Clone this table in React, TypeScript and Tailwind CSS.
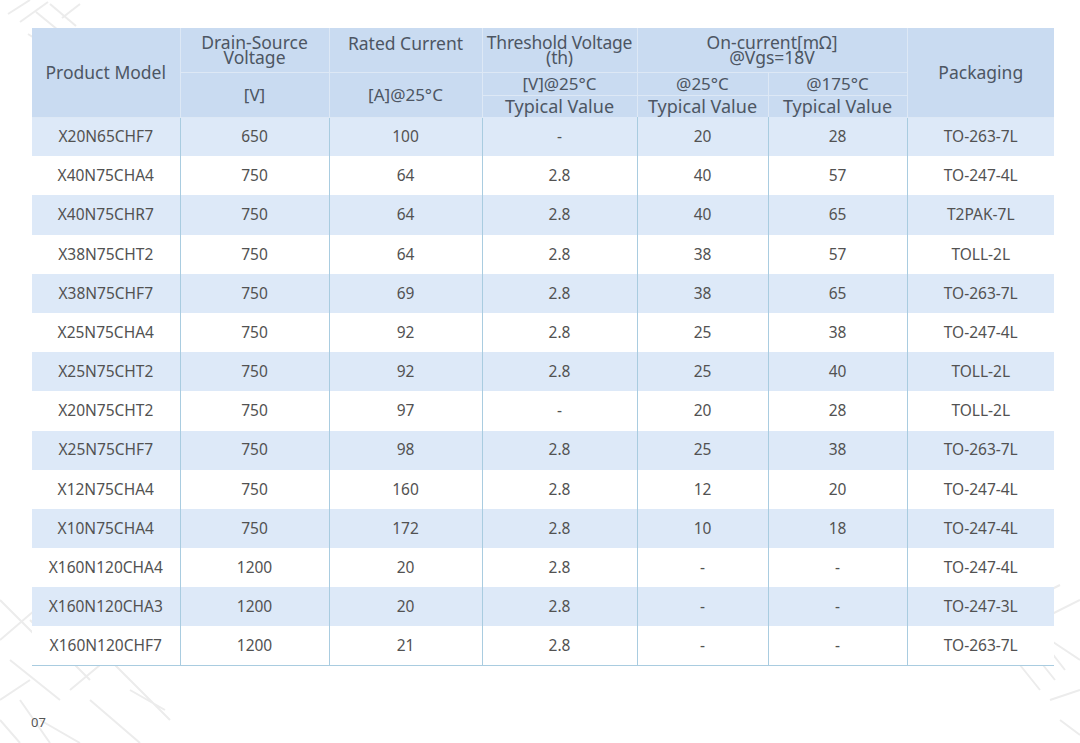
import React from "react";

const rows: string[][] = [
  ["X20N65CHF7", "650", "100", "-", "20", "28", "TO-263-7L"],
  ["X40N75CHA4", "750", "64", "2.8", "40", "57", "TO-247-4L"],
  ["X40N75CHR7", "750", "64", "2.8", "40", "65", "T2PAK-7L"],
  ["X38N75CHT2", "750", "64", "2.8", "38", "57", "TOLL-2L"],
  ["X38N75CHF7", "750", "69", "2.8", "38", "65", "TO-263-7L"],
  ["X25N75CHA4", "750", "92", "2.8", "25", "38", "TO-247-4L"],
  ["X25N75CHT2", "750", "92", "2.8", "25", "40", "TOLL-2L"],
  ["X20N75CHT2", "750", "97", "-", "20", "28", "TOLL-2L"],
  ["X25N75CHF7", "750", "98", "2.8", "25", "38", "TO-263-7L"],
  ["X12N75CHA4", "750", "160", "2.8", "12", "20", "TO-247-4L"],
  ["X10N75CHA4", "750", "172", "2.8", "10", "18", "TO-247-4L"],
  ["X160N120CHA4", "1200", "20", "2.8", "-", "-", "TO-247-4L"],
  ["X160N120CHA3", "1200", "20", "2.8", "-", "-", "TO-247-3L"],
  ["X160N120CHF7", "1200", "21", "2.8", "-", "-", "TO-263-7L"],
];

const widths = [148, 149, 153, 155, 131, 139, 147];

function Watermark() {
  return (
    <svg
      className="absolute inset-0 pointer-events-none"
      width="1080"
      height="743"
      viewBox="0 0 1080 743"
      fill="none"
      stroke="#ececec"
      strokeWidth="2"
    >
      <path d="M8 14 L30 0 M20 22 L48 2 M36 12 L58 30 M50 4 L76 26 M28 34 L50 48 M62 18 L80 4" />
      <path d="M0 600 L40 640 M0 640 L70 580 M10 660 L60 700 M30 620 L90 680 M60 650 L120 600 M70 690 L130 640 M20 700 L50 743 M90 700 L140 743 M110 660 L170 720 M0 700 L30 680 M40 720 L80 743 M130 690 L165 710" />
      <path d="M0 720 L20 743 M50 600 L80 630 M100 620 L140 660" />
      <path d="M1040 620 L1080 600 M1050 640 L1080 660 M1030 600 L1060 585 M1000 640 L1040 690 M1015 630 L1055 680 M1030 625 L1065 670 M1050 700 L1080 690 M1060 720 L1080 735 M1010 600 L1050 605" />
    </svg>
  );
}

export default function App() {
  const hdr =
    "bg-[#c9dbf1] text-[#4d5663] font-normal border border-[#dde8f5] p-0 align-middle text-center whitespace-nowrap";
  return (
    <div
      className="relative w-[1080px] h-[743px] bg-white overflow-hidden"
      style={{ fontFamily: '"Noto Sans", "Open Sans", sans-serif' }}
    >
      <Watermark />
      <div className="relative pt-[28px] pl-[32px]">
        <table className="table-fixed border-collapse w-[1022px]">
          <colgroup>
            {widths.map((w, i) => (
              <col key={i} style={{ width: w }} />
            ))}
          </colgroup>
          <thead>
            <tr className="h-[44px]">
              <th rowSpan={3} className={`${hdr} text-[17.5px] border-l-0 border-t-0`}>
                Product Model
              </th>
              <th className={`${hdr} text-[17.5px] leading-[15px] border-t-0 pt-[1px]`}>
                Drain-Source
                <br />
                Voltage
              </th>
              <th className={`${hdr} text-[17.5px] leading-[15px] border-t-0 align-top pt-[8px]`}>
                Rated Current
              </th>
              <th className={`${hdr} text-[17.5px] tracking-[-0.2px] leading-[15px] border-t-0 pt-[1px]`}>
                Threshold Voltage
                <br />
                (th)
              </th>
              <th colSpan={2} className={`${hdr} text-[17.5px] leading-[15px] border-t-0 pt-[1px]`}>
                On-current[mΩ]
                <br />
                @Vgs=18V
              </th>
              <th rowSpan={3} className={`${hdr} text-[17.5px] border-r-0 border-t-0`}>
                Packaging
              </th>
            </tr>
            <tr className="h-[23px]">
              <th rowSpan={2} className={`${hdr} text-[17px]`}>
                [V]
              </th>
              <th rowSpan={2} className={`${hdr} text-[17px]`}>
                [A]@25°C
              </th>
              <th className={`${hdr} text-[17px] leading-[20px]`}>[V]@25°C</th>
              <th className={`${hdr} text-[17px] leading-[20px]`}>@25°C</th>
              <th className={`${hdr} text-[17px] leading-[20px]`}>@175°C</th>
            </tr>
            <tr className="h-[22px]">
              <th className={`${hdr} text-[18px] leading-[20px] border-b-0`}>Typical Value</th>
              <th className={`${hdr} text-[18px] leading-[20px] border-b-0`}>Typical Value</th>
              <th className={`${hdr} text-[18px] leading-[20px] border-b-0`}>Typical Value</th>
            </tr>
          </thead>
          <tbody className="border-b border-[#a9cce0]">
            {rows.map((r, i) => (
              <tr
                key={i}
                className={`h-[39.2px] ${i % 2 === 0 ? "bg-[#dde9f8]" : "bg-white"}`}
              >
                {r.map((c, j) => (
                  <td
                    key={j}
                    className={`p-0 text-center text-[15.5px] text-[#525252] ${
                      j < 6 ? "border-r border-[#a9cce0]" : ""
                    }`}
                  >
                    {c}
                  </td>
                ))}
              </tr>
            ))}
          </tbody>
        </table>
      </div>
      <div className="absolute left-[31px] top-[713px] text-[13px] text-[#555]">07</div>
    </div>
  );
}
